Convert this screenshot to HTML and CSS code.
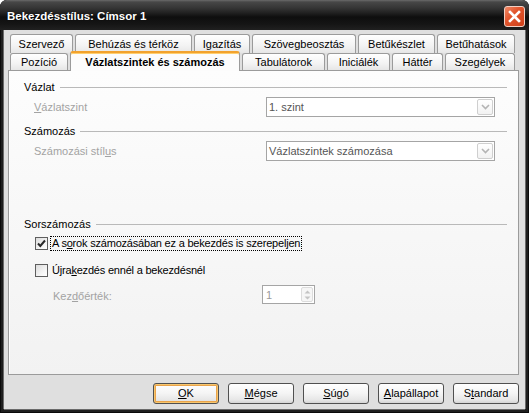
FILE: index.html
```html
<!DOCTYPE html>
<html lang="hu">
<head>
<meta charset="utf-8">
<title>Bekezdésstílus: Címsor 1</title>
<link rel="stylesheet" href="styles.css">
</head>
<body>
<div class="window">
  <div class="titlebar">
    <span class="title">Bekezdésstílus: Címsor 1</span>
    <span class="close">
      <svg width="19" height="19" viewBox="0 0 19 19"><path d="M5 5 L14 14 M14 5 L5 14" stroke="#fff" stroke-width="2.6" stroke-linecap="square" fill="none"/></svg>
    </span>
  </div>
  <div class="client">
    <div class="tabs">
      <div class="tabrow row1">
        <div class="tab">Szervező</div>
        <div class="tab">Behúzás és térköz</div>
        <div class="tab">Igazítás</div>
        <div class="tab">Szövegbeosztás</div>
        <div class="tab">Betűkészlet</div>
        <div class="tab">Betűhatások</div>
      </div>
      <div class="tabrow row2">
        <div class="tab">Pozíció</div>
        <div class="tab active">Vázlatszintek és számozás</div>
        <div class="tab">Tabulátorok</div>
        <div class="tab">Iniciálék</div>
        <div class="tab">Háttér</div>
        <div class="tab">Szegélyek</div>
      </div>
    </div>
    <div class="panel">
      <div class="legend l1"><span>Vázlat</span></div>
      <div class="field f1">
        <span class="dim"><u>V</u>ázlatszint</span>
        <div class="combo"><span>1. szint</span><span class="drop"><svg width="9" height="6" viewBox="0 0 9 6"><path d="M1 1 L4.5 4.5 L8 1" stroke="#b4b4b4" stroke-width="1.6" fill="none"/></svg></span></div>
      </div>
      <div class="legend l2"><span>Számozás</span></div>
      <div class="field f2">
        <span class="dim">Számozási stíl<u>u</u>s</span>
        <div class="combo"><span>Vázlatszintek számozása</span><span class="drop"><svg width="9" height="6" viewBox="0 0 9 6"><path d="M1 1 L4.5 4.5 L8 1" stroke="#b4b4b4" stroke-width="1.6" fill="none"/></svg></span></div>
      </div>
      <div class="legend l3"><span>Sorszámozás</span></div>
      <div class="check c1">
        <span class="box"><svg width="11" height="11" viewBox="0 0 11 11"><path d="M2 5.5 L4.3 8 L9 2.5" stroke="#2a2a2a" stroke-width="2" fill="none"/></svg></span>
        <span class="focus">A s<u>o</u>rok számozásában ez a bekezdés is szerepeljen</span>
      </div>
      <div class="check c2">
        <span class="box"></span>
        <span class="lbl">Újra<u>k</u>ezdés ennél a bekezdésnél</span>
      </div>
      <div class="field f3">
        <span class="dim">Kez<u>d</u>őérték:</span>
        <div class="spin"><span>1</span><span class="arrows"><svg width="9" height="14" viewBox="0 0 9 14"><path d="M4.5 2.5 L7.5 5.5 L1.5 5.5 Z M4.5 11.5 L7.5 8.5 L1.5 8.5 Z" fill="#c4c4c4"/></svg></span></div>
      </div>
    </div>
    <div class="buttons">
      <div class="btn default"><u>O</u>K</div>
      <div class="btn"><u>M</u>égse</div>
      <div class="btn"><u>S</u>úgó</div>
      <div class="btn"><u>A</u>lapállapot</div>
      <div class="btn">S<u>t</u>andard</div>
    </div>
  </div>
</div>
</body>
</html>
```
FILE: styles.css
```css
html, body {
  margin: 0;
  padding: 0;
  background: #ffffff;
}
body {
  font-family: "Liberation Sans", Arial, sans-serif;
  font-size: 11px;
  color: #000;
}
.window {
  width: 529px;
  height: 413px;
  display: flex;
  flex-direction: column;
  background: #1e1e1e;
  border-radius: 7px 7px 0 0;
  overflow: hidden;
  box-sizing: border-box;
  box-shadow: inset 0 0 0 1px #0a0a0a;
}
.titlebar {
  flex: none;
  height: 30px;
  box-sizing: border-box;
  padding: 2px 4px 0 7px;
  display: flex;
  align-items: center;
  justify-content: space-between;
  background: linear-gradient(#6a6a6a 0, #474747 2px, #353535 8px, #1c1c1c 14px, #0e0e0e 17px, #151515 24px, #202020 30px);
  color: #fff;
  font-weight: bold;
  font-size: 11.5px;
}
.title {
  text-shadow: 0 0 1px rgba(0,0,0,0.6);
}
.close {
  width: 21px;
  height: 21px;
  box-sizing: border-box;
  border: 1px solid #f1cfc3;
  border-radius: 3px;
  background: linear-gradient(135deg, #f08a68 0%, #e2562e 40%, #cf3f18 100%);
  display: flex;
  align-items: center;
  justify-content: center;
}
.client {
  flex: 1;
  margin: 0 4px 4px 4px;
  background: #dfdfdf;
  padding: 4px 6px 0 4px;
  box-shadow: -1px 0 0 #6a6a6a, 1px 0 0 #6a6a6a, 0 1px 0 #6a6a6a;
}
.tabs {
  margin-left: 2px;
}
.tabrow {
  display: grid;
  column-gap: 2px;
}
.row1 {
  grid-template-columns: 63px 117px 56px 104px 77px 78px;
  height: 19px;
}
.row2 {
  grid-template-columns: 58px 170px 83px 63px 51px 70px;
  height: 17px;
}
.tab {
  box-sizing: border-box;
  border: 1px solid #9b9b9b;
  border-bottom: none;
  border-radius: 3px 3px 0 0;
  background: linear-gradient(#ffffff, #f3f3f3 60%, #e6e6e6);
  text-align: center;
  white-space: nowrap;
}
.row1 .tab {
  line-height: 18px;
}
.row2 .tab {
  line-height: 16px;
}
.row2 .tab.active {
  margin-top: -2px;
  margin-bottom: -1px;
  z-index: 2;
  border-top: 2px solid #f2a22e;
  box-shadow: inset 0 1px 0 #ffcf6e;
  background: #fcfcfc;
  font-weight: bold;
  line-height: 17px;
  padding-top: 1px;
}
.panel {
  width: 511px;
  height: 305px;
  box-sizing: border-box;
  border: 1px solid #9b9b9b;
  background: linear-gradient(#fdfdfd, #f2f2f2);
  box-shadow: inset 1px 0 0 #ffffff;
  padding: 0 11px 0 15px;
}
.legend {
  display: flex;
  align-items: center;
  height: 14px;
  line-height: 14px;
}
.legend::after {
  content: "";
  flex: 1;
  height: 1px;
  background: #b9b9b9;
  margin-left: 5px;
}
.l1 { margin-top: 9px; }
.l2 { margin-top: 7px; }
.l3 { margin-top: 56px; }
.field {
  display: grid;
  align-items: center;
}
.f1, .f2 {
  grid-template-columns: 242px 229px;
  margin-top: 3px;
}
.dim {
  color: #a3a3a3;
  padding-left: 10px;
}
.combo {
  height: 20px;
  box-sizing: border-box;
  border: 1px solid #a5a5a5;
  background: #ffffff;
  color: #555555;
  display: flex;
  align-items: center;
  justify-content: space-between;
  padding: 0 1px 0 2px;
}
.drop {
  width: 16px;
  height: 16px;
  box-sizing: border-box;
  border: 1px solid #cfcfcf;
  border-radius: 2px;
  background: linear-gradient(#ffffff, #f2f2f2);
  display: flex;
  align-items: center;
  justify-content: center;
}
.check {
  display: flex;
  align-items: center;
  height: 14px;
  padding-left: 11px;
  letter-spacing: -0.2px;
}
.c1 { margin-top: 5px; }
.c2 { margin-top: 13px; }
.box {
  width: 13px;
  height: 13px;
  box-sizing: border-box;
  border: 1px solid #5e5e5e;
  background: linear-gradient(135deg, #dcdcdc, #f7f7f7 70%, #ffffff);
  display: flex;
  align-items: center;
  justify-content: center;
  margin-right: 3px;
}
.focus {
  outline: 1px dotted #000;
  outline-offset: 0;
  padding: 0 1px;
  line-height: 13px;
}
.lbl {
  padding-left: 1px;
}
.f3 {
  grid-template-columns: 238px 53px;
  margin-top: 8px;
}
.f3 .dim {
  padding-left: 29px;
  padding-top: 3px;
}
.spin {
  height: 19px;
  box-sizing: border-box;
  border: 1px solid #a5a5a5;
  background: #ffffff;
  color: #9a9a9a;
  display: flex;
  align-items: center;
  justify-content: space-between;
  padding: 0 1px 0 3px;
}
.arrows {
  width: 12px;
  height: 15px;
  box-sizing: border-box;
  border: 1px solid #dcdcdc;
  border-radius: 2px;
  background: #f6f6f6;
  display: flex;
  align-items: center;
  justify-content: center;
}
.buttons {
  display: flex;
  justify-content: flex-end;
  gap: 9px;
  margin-top: 8px;
}
.btn {
  width: 66px;
  height: 21px;
  box-sizing: border-box;
  border: 1px solid #505050;
  border-radius: 3px;
  background: linear-gradient(#ffffff, #f4f4f4 50%, #e6e6e6 85%, #d4d4d4);
  text-align: center;
  line-height: 19px;
}
.btn.default {
  box-shadow: inset 0 0 0 1px #f7c66f, inset 0 0 0 2px #eaa44a;
}
```
